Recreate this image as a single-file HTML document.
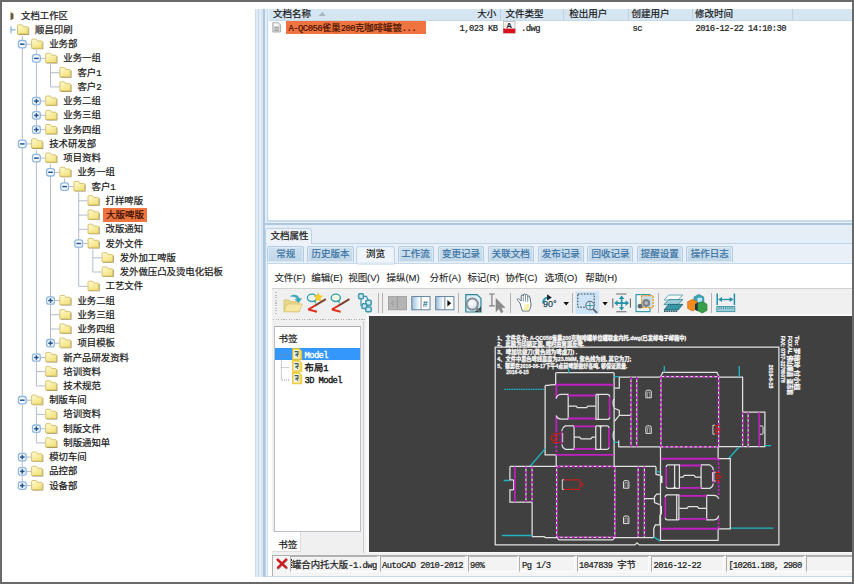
<!DOCTYPE html>
<html lang="zh-CN"><head><meta charset="utf-8"><title>文档工作区</title>
<style>
*{box-sizing:border-box;margin:0;padding:0}
html,body{width:854px;height:584px;overflow:hidden;background:#fff}
body{position:relative;-webkit-text-stroke:0.22px currentColor;font-family:"Liberation Sans","Noto Sans CJK SC",sans-serif;font-size:9.5px;color:#1c1c1c;line-height:14px}
#frame{position:absolute;left:0;top:0;width:854px;height:584px;border:2px solid #6a6a6a;pointer-events:none;z-index:50}
.abs{position:absolute}
#tree{position:absolute;left:0;top:0;width:254px;height:584px;overflow:hidden}
.tl{position:absolute;white-space:nowrap;height:14px;line-height:14px;padding:0 1px;font-size:9.4px;color:#1a1a1a}
.tl.sel{background:#f0743f;color:#3a0d00;padding:0 3px;margin-left:-1.6px;font-size:9.5px;height:14.2px}
.t{position:absolute;white-space:nowrap}
.mn{font-size:9.5px;line-height:14px;color:#222;letter-spacing:-0.05px;-webkit-text-stroke:0.1px #222}
.sf{font-family:'Liberation Mono','Noto Sans CJK SC',monospace;font-size:8.8px;letter-spacing:-0.52px;line-height:13.4px;color:#1c1c1c;white-space:nowrap;overflow:hidden;border-top:1.3px solid #b2b2b2;border-left:1.3px solid #adadad;border-bottom:1px solid #fff;border-right:1px solid #fff;background:#f3f3f3}
.ss{font-family:'Liberation Mono','Noto Sans CJK SC',monospace;font-size:8.8px;letter-spacing:-0.52px}
.cj{font-size:9.4px;letter-spacing:0;font-family:'Noto Sans CJK SC',sans-serif}
.lh{line-height:14px;font-size:9.5px;color:#1a1a1a}
.tab{text-align:center;line-height:14.6px;font-size:9.5px;color:#3973a3;background:linear-gradient(#cfe0ee,#bfd6e8);border:1.1px solid #b3cde3;border-bottom:none;border-radius:2.5px 2.5px 0 0;white-space:nowrap;box-shadow:inset 0 0 0 1px rgba(225,236,246,0.75)}
.tab.act{background:#eff4fa;color:#1a1a1a;border-color:#bfd5e8;border-width:1.4px;line-height:13.8px;z-index:3}
</style></head>
<body>
<div id="tree">
<svg width="254" height="580" style="position:absolute;left:0;top:0"><defs><linearGradient id="fg" x1="0" y1="0" x2="0.6" y2="1"><stop offset="0" stop-color="#fffcd8"/><stop offset="1" stop-color="#f3e27c"/></linearGradient></defs>
<line x1="22.3" y1="35.9" x2="22.3" y2="485.6" stroke="#b3bccb" stroke-width="1"/>
<line x1="36.4" y1="50.2" x2="36.4" y2="129.6" stroke="#b3bccb" stroke-width="1"/>
<line x1="50.5" y1="64.4" x2="50.5" y2="86.9" stroke="#b3bccb" stroke-width="1"/>
<line x1="36.4" y1="149.9" x2="36.4" y2="385.9" stroke="#b3bccb" stroke-width="1"/>
<line x1="50.5" y1="164.1" x2="50.5" y2="343.2" stroke="#b3bccb" stroke-width="1"/>
<line x1="64.6" y1="178.3" x2="64.6" y2="186.6" stroke="#b3bccb" stroke-width="1"/>
<line x1="78.7" y1="192.6" x2="78.7" y2="286.3" stroke="#b3bccb" stroke-width="1"/>
<line x1="92.8" y1="249.5" x2="92.8" y2="272.0" stroke="#b3bccb" stroke-width="1"/>
<line x1="36.4" y1="406.2" x2="36.4" y2="442.9" stroke="#b3bccb" stroke-width="1"/>
<path d="M10.5 12.2 L13.5 13.7 L13.5 18.7 L10.5 20.2 Z" fill="#6b5a3a"/>
<path d="M10.5 11.2 L12.5 12.7 L10.5 13.2 Z" fill="#e8d87a"/>
<path d="M11 26.4 V33.4 M11 29.9 H15.5" stroke="#6f9fd0" stroke-width="1" fill="none"/>
<g transform="translate(17.0 24.3)"><path d="M1.4 10.6 H12.2 V3.4 H11.4 V9.8 H1.4 Z" fill="#6d6338" opacity="0.7"/><path d="M0.5 9.7 V1.6 Q0.5 0.5 1.6 0.5 H4.6 Q5.6 0.5 6 1.5 L6.4 2.4 H10.2 Q11.2 2.4 11.2 3.4 V9.7 Z" fill="url(#fg)" stroke="#cdb552" stroke-width="0.8"/></g>
<line x1="22.3" y1="44.2" x2="31.1" y2="44.2" stroke="#b3bccb" stroke-width="1"/>
<rect x="18.4" y="40.5" width="7.8" height="7.4" rx="2.3" fill="#f6fafe" stroke="#8fb7dc" stroke-width="1.3"/>
<line x1="20.0" y1="44.2" x2="24.6" y2="44.2" stroke="#24558f" stroke-width="1.5"/>
<g transform="translate(31.1 38.6)"><path d="M1.4 10.6 H12.2 V3.4 H11.4 V9.8 H1.4 Z" fill="#6d6338" opacity="0.7"/><path d="M0.5 9.7 V1.6 Q0.5 0.5 1.6 0.5 H4.6 Q5.6 0.5 6 1.5 L6.4 2.4 H10.2 Q11.2 2.4 11.2 3.4 V9.7 Z" fill="url(#fg)" stroke="#cdb552" stroke-width="0.8"/></g>
<line x1="36.4" y1="58.4" x2="45.2" y2="58.4" stroke="#b3bccb" stroke-width="1"/>
<rect x="32.5" y="54.7" width="7.8" height="7.4" rx="2.3" fill="#f6fafe" stroke="#8fb7dc" stroke-width="1.3"/>
<line x1="34.1" y1="58.4" x2="38.7" y2="58.4" stroke="#24558f" stroke-width="1.5"/>
<g transform="translate(45.2 52.8)"><path d="M1.4 10.6 H12.2 V3.4 H11.4 V9.8 H1.4 Z" fill="#6d6338" opacity="0.7"/><path d="M0.5 9.7 V1.6 Q0.5 0.5 1.6 0.5 H4.6 Q5.6 0.5 6 1.5 L6.4 2.4 H10.2 Q11.2 2.4 11.2 3.4 V9.7 Z" fill="url(#fg)" stroke="#cdb552" stroke-width="0.8"/></g>
<line x1="50.5" y1="72.7" x2="59.3" y2="72.7" stroke="#b3bccb" stroke-width="1"/>
<g transform="translate(59.3 67.1)"><path d="M1.4 10.6 H12.2 V3.4 H11.4 V9.8 H1.4 Z" fill="#6d6338" opacity="0.7"/><path d="M0.5 9.7 V1.6 Q0.5 0.5 1.6 0.5 H4.6 Q5.6 0.5 6 1.5 L6.4 2.4 H10.2 Q11.2 2.4 11.2 3.4 V9.7 Z" fill="url(#fg)" stroke="#cdb552" stroke-width="0.8"/></g>
<line x1="50.5" y1="86.9" x2="59.3" y2="86.9" stroke="#b3bccb" stroke-width="1"/>
<g transform="translate(59.3 81.3)"><path d="M1.4 10.6 H12.2 V3.4 H11.4 V9.8 H1.4 Z" fill="#6d6338" opacity="0.7"/><path d="M0.5 9.7 V1.6 Q0.5 0.5 1.6 0.5 H4.6 Q5.6 0.5 6 1.5 L6.4 2.4 H10.2 Q11.2 2.4 11.2 3.4 V9.7 Z" fill="url(#fg)" stroke="#cdb552" stroke-width="0.8"/></g>
<line x1="36.4" y1="101.1" x2="45.2" y2="101.1" stroke="#b3bccb" stroke-width="1"/>
<rect x="32.5" y="97.4" width="7.8" height="7.4" rx="2.3" fill="#f6fafe" stroke="#8fb7dc" stroke-width="1.3"/>
<line x1="34.1" y1="101.1" x2="38.7" y2="101.1" stroke="#24558f" stroke-width="1.5"/>
<line x1="36.4" y1="98.8" x2="36.4" y2="103.4" stroke="#24558f" stroke-width="1.5"/>
<g transform="translate(45.2 95.5)"><path d="M1.4 10.6 H12.2 V3.4 H11.4 V9.8 H1.4 Z" fill="#6d6338" opacity="0.7"/><path d="M0.5 9.7 V1.6 Q0.5 0.5 1.6 0.5 H4.6 Q5.6 0.5 6 1.5 L6.4 2.4 H10.2 Q11.2 2.4 11.2 3.4 V9.7 Z" fill="url(#fg)" stroke="#cdb552" stroke-width="0.8"/></g>
<line x1="36.4" y1="115.4" x2="45.2" y2="115.4" stroke="#b3bccb" stroke-width="1"/>
<rect x="32.5" y="111.7" width="7.8" height="7.4" rx="2.3" fill="#f6fafe" stroke="#8fb7dc" stroke-width="1.3"/>
<line x1="34.1" y1="115.4" x2="38.7" y2="115.4" stroke="#24558f" stroke-width="1.5"/>
<line x1="36.4" y1="113.1" x2="36.4" y2="117.7" stroke="#24558f" stroke-width="1.5"/>
<g transform="translate(45.2 109.8)"><path d="M1.4 10.6 H12.2 V3.4 H11.4 V9.8 H1.4 Z" fill="#6d6338" opacity="0.7"/><path d="M0.5 9.7 V1.6 Q0.5 0.5 1.6 0.5 H4.6 Q5.6 0.5 6 1.5 L6.4 2.4 H10.2 Q11.2 2.4 11.2 3.4 V9.7 Z" fill="url(#fg)" stroke="#cdb552" stroke-width="0.8"/></g>
<line x1="36.4" y1="129.6" x2="45.2" y2="129.6" stroke="#b3bccb" stroke-width="1"/>
<rect x="32.5" y="125.9" width="7.8" height="7.4" rx="2.3" fill="#f6fafe" stroke="#8fb7dc" stroke-width="1.3"/>
<line x1="34.1" y1="129.6" x2="38.7" y2="129.6" stroke="#24558f" stroke-width="1.5"/>
<line x1="36.4" y1="127.3" x2="36.4" y2="131.9" stroke="#24558f" stroke-width="1.5"/>
<g transform="translate(45.2 124.0)"><path d="M1.4 10.6 H12.2 V3.4 H11.4 V9.8 H1.4 Z" fill="#6d6338" opacity="0.7"/><path d="M0.5 9.7 V1.6 Q0.5 0.5 1.6 0.5 H4.6 Q5.6 0.5 6 1.5 L6.4 2.4 H10.2 Q11.2 2.4 11.2 3.4 V9.7 Z" fill="url(#fg)" stroke="#cdb552" stroke-width="0.8"/></g>
<line x1="22.3" y1="143.9" x2="31.1" y2="143.9" stroke="#b3bccb" stroke-width="1"/>
<rect x="18.4" y="140.2" width="7.8" height="7.4" rx="2.3" fill="#f6fafe" stroke="#8fb7dc" stroke-width="1.3"/>
<line x1="20.0" y1="143.9" x2="24.6" y2="143.9" stroke="#24558f" stroke-width="1.5"/>
<g transform="translate(31.1 138.3)"><path d="M1.4 10.6 H12.2 V3.4 H11.4 V9.8 H1.4 Z" fill="#6d6338" opacity="0.7"/><path d="M0.5 9.7 V1.6 Q0.5 0.5 1.6 0.5 H4.6 Q5.6 0.5 6 1.5 L6.4 2.4 H10.2 Q11.2 2.4 11.2 3.4 V9.7 Z" fill="url(#fg)" stroke="#cdb552" stroke-width="0.8"/></g>
<line x1="36.4" y1="158.1" x2="45.2" y2="158.1" stroke="#b3bccb" stroke-width="1"/>
<rect x="32.5" y="154.4" width="7.8" height="7.4" rx="2.3" fill="#f6fafe" stroke="#8fb7dc" stroke-width="1.3"/>
<line x1="34.1" y1="158.1" x2="38.7" y2="158.1" stroke="#24558f" stroke-width="1.5"/>
<g transform="translate(45.2 152.5)"><path d="M1.4 10.6 H12.2 V3.4 H11.4 V9.8 H1.4 Z" fill="#6d6338" opacity="0.7"/><path d="M0.5 9.7 V1.6 Q0.5 0.5 1.6 0.5 H4.6 Q5.6 0.5 6 1.5 L6.4 2.4 H10.2 Q11.2 2.4 11.2 3.4 V9.7 Z" fill="url(#fg)" stroke="#cdb552" stroke-width="0.8"/></g>
<line x1="50.5" y1="172.3" x2="59.3" y2="172.3" stroke="#b3bccb" stroke-width="1"/>
<rect x="46.6" y="168.6" width="7.8" height="7.4" rx="2.3" fill="#f6fafe" stroke="#8fb7dc" stroke-width="1.3"/>
<line x1="48.2" y1="172.3" x2="52.8" y2="172.3" stroke="#24558f" stroke-width="1.5"/>
<g transform="translate(59.3 166.7)"><path d="M1.4 10.6 H12.2 V3.4 H11.4 V9.8 H1.4 Z" fill="#6d6338" opacity="0.7"/><path d="M0.5 9.7 V1.6 Q0.5 0.5 1.6 0.5 H4.6 Q5.6 0.5 6 1.5 L6.4 2.4 H10.2 Q11.2 2.4 11.2 3.4 V9.7 Z" fill="url(#fg)" stroke="#cdb552" stroke-width="0.8"/></g>
<line x1="64.6" y1="186.6" x2="73.4" y2="186.6" stroke="#b3bccb" stroke-width="1"/>
<rect x="60.7" y="182.9" width="7.8" height="7.4" rx="2.3" fill="#f6fafe" stroke="#8fb7dc" stroke-width="1.3"/>
<line x1="62.3" y1="186.6" x2="66.9" y2="186.6" stroke="#24558f" stroke-width="1.5"/>
<g transform="translate(73.4 181.0)"><path d="M1.4 10.6 H12.2 V3.4 H11.4 V9.8 H1.4 Z" fill="#6d6338" opacity="0.7"/><path d="M0.5 9.7 V1.6 Q0.5 0.5 1.6 0.5 H4.6 Q5.6 0.5 6 1.5 L6.4 2.4 H10.2 Q11.2 2.4 11.2 3.4 V9.7 Z" fill="url(#fg)" stroke="#cdb552" stroke-width="0.8"/></g>
<line x1="78.7" y1="200.8" x2="87.5" y2="200.8" stroke="#b3bccb" stroke-width="1"/>
<g transform="translate(87.5 195.2)"><path d="M1.4 10.6 H12.2 V3.4 H11.4 V9.8 H1.4 Z" fill="#6d6338" opacity="0.7"/><path d="M0.5 9.7 V1.6 Q0.5 0.5 1.6 0.5 H4.6 Q5.6 0.5 6 1.5 L6.4 2.4 H10.2 Q11.2 2.4 11.2 3.4 V9.7 Z" fill="url(#fg)" stroke="#cdb552" stroke-width="0.8"/></g>
<line x1="78.7" y1="215.1" x2="87.5" y2="215.1" stroke="#b3bccb" stroke-width="1"/>
<g transform="translate(87.5 209.5)"><path d="M1.4 10.6 H12.2 V3.4 H11.4 V9.8 H1.4 Z" fill="#6d6338" opacity="0.7"/><path d="M0.5 9.7 V1.6 Q0.5 0.5 1.6 0.5 H4.6 Q5.6 0.5 6 1.5 L6.4 2.4 H10.2 Q11.2 2.4 11.2 3.4 V9.7 Z" fill="url(#fg)" stroke="#cdb552" stroke-width="0.8"/></g>
<line x1="78.7" y1="229.3" x2="87.5" y2="229.3" stroke="#b3bccb" stroke-width="1"/>
<g transform="translate(87.5 223.7)"><path d="M1.4 10.6 H12.2 V3.4 H11.4 V9.8 H1.4 Z" fill="#6d6338" opacity="0.7"/><path d="M0.5 9.7 V1.6 Q0.5 0.5 1.6 0.5 H4.6 Q5.6 0.5 6 1.5 L6.4 2.4 H10.2 Q11.2 2.4 11.2 3.4 V9.7 Z" fill="url(#fg)" stroke="#cdb552" stroke-width="0.8"/></g>
<line x1="78.7" y1="243.5" x2="87.5" y2="243.5" stroke="#b3bccb" stroke-width="1"/>
<rect x="74.8" y="239.8" width="7.8" height="7.4" rx="2.3" fill="#f6fafe" stroke="#8fb7dc" stroke-width="1.3"/>
<line x1="76.4" y1="243.5" x2="81.0" y2="243.5" stroke="#24558f" stroke-width="1.5"/>
<g transform="translate(87.5 237.9)"><path d="M1.4 10.6 H12.2 V3.4 H11.4 V9.8 H1.4 Z" fill="#6d6338" opacity="0.7"/><path d="M0.5 9.7 V1.6 Q0.5 0.5 1.6 0.5 H4.6 Q5.6 0.5 6 1.5 L6.4 2.4 H10.2 Q11.2 2.4 11.2 3.4 V9.7 Z" fill="url(#fg)" stroke="#cdb552" stroke-width="0.8"/></g>
<line x1="92.8" y1="257.8" x2="101.6" y2="257.8" stroke="#b3bccb" stroke-width="1"/>
<g transform="translate(101.6 252.2)"><path d="M1.4 10.6 H12.2 V3.4 H11.4 V9.8 H1.4 Z" fill="#6d6338" opacity="0.7"/><path d="M0.5 9.7 V1.6 Q0.5 0.5 1.6 0.5 H4.6 Q5.6 0.5 6 1.5 L6.4 2.4 H10.2 Q11.2 2.4 11.2 3.4 V9.7 Z" fill="url(#fg)" stroke="#cdb552" stroke-width="0.8"/></g>
<line x1="92.8" y1="272.0" x2="101.6" y2="272.0" stroke="#b3bccb" stroke-width="1"/>
<g transform="translate(101.6 266.4)"><path d="M1.4 10.6 H12.2 V3.4 H11.4 V9.8 H1.4 Z" fill="#6d6338" opacity="0.7"/><path d="M0.5 9.7 V1.6 Q0.5 0.5 1.6 0.5 H4.6 Q5.6 0.5 6 1.5 L6.4 2.4 H10.2 Q11.2 2.4 11.2 3.4 V9.7 Z" fill="url(#fg)" stroke="#cdb552" stroke-width="0.8"/></g>
<line x1="78.7" y1="286.3" x2="87.5" y2="286.3" stroke="#b3bccb" stroke-width="1"/>
<g transform="translate(87.5 280.7)"><path d="M1.4 10.6 H12.2 V3.4 H11.4 V9.8 H1.4 Z" fill="#6d6338" opacity="0.7"/><path d="M0.5 9.7 V1.6 Q0.5 0.5 1.6 0.5 H4.6 Q5.6 0.5 6 1.5 L6.4 2.4 H10.2 Q11.2 2.4 11.2 3.4 V9.7 Z" fill="url(#fg)" stroke="#cdb552" stroke-width="0.8"/></g>
<line x1="50.5" y1="300.5" x2="59.3" y2="300.5" stroke="#b3bccb" stroke-width="1"/>
<rect x="46.6" y="296.8" width="7.8" height="7.4" rx="2.3" fill="#f6fafe" stroke="#8fb7dc" stroke-width="1.3"/>
<line x1="48.2" y1="300.5" x2="52.8" y2="300.5" stroke="#24558f" stroke-width="1.5"/>
<line x1="50.5" y1="298.2" x2="50.5" y2="302.8" stroke="#24558f" stroke-width="1.5"/>
<g transform="translate(59.3 294.9)"><path d="M1.4 10.6 H12.2 V3.4 H11.4 V9.8 H1.4 Z" fill="#6d6338" opacity="0.7"/><path d="M0.5 9.7 V1.6 Q0.5 0.5 1.6 0.5 H4.6 Q5.6 0.5 6 1.5 L6.4 2.4 H10.2 Q11.2 2.4 11.2 3.4 V9.7 Z" fill="url(#fg)" stroke="#cdb552" stroke-width="0.8"/></g>
<line x1="50.5" y1="314.7" x2="59.3" y2="314.7" stroke="#b3bccb" stroke-width="1"/>
<g transform="translate(59.3 309.1)"><path d="M1.4 10.6 H12.2 V3.4 H11.4 V9.8 H1.4 Z" fill="#6d6338" opacity="0.7"/><path d="M0.5 9.7 V1.6 Q0.5 0.5 1.6 0.5 H4.6 Q5.6 0.5 6 1.5 L6.4 2.4 H10.2 Q11.2 2.4 11.2 3.4 V9.7 Z" fill="url(#fg)" stroke="#cdb552" stroke-width="0.8"/></g>
<line x1="50.5" y1="329.0" x2="59.3" y2="329.0" stroke="#b3bccb" stroke-width="1"/>
<g transform="translate(59.3 323.4)"><path d="M1.4 10.6 H12.2 V3.4 H11.4 V9.8 H1.4 Z" fill="#6d6338" opacity="0.7"/><path d="M0.5 9.7 V1.6 Q0.5 0.5 1.6 0.5 H4.6 Q5.6 0.5 6 1.5 L6.4 2.4 H10.2 Q11.2 2.4 11.2 3.4 V9.7 Z" fill="url(#fg)" stroke="#cdb552" stroke-width="0.8"/></g>
<line x1="50.5" y1="343.2" x2="59.3" y2="343.2" stroke="#b3bccb" stroke-width="1"/>
<rect x="46.6" y="339.5" width="7.8" height="7.4" rx="2.3" fill="#f6fafe" stroke="#8fb7dc" stroke-width="1.3"/>
<line x1="48.2" y1="343.2" x2="52.8" y2="343.2" stroke="#24558f" stroke-width="1.5"/>
<line x1="50.5" y1="340.9" x2="50.5" y2="345.5" stroke="#24558f" stroke-width="1.5"/>
<g transform="translate(59.3 337.6)"><path d="M1.4 10.6 H12.2 V3.4 H11.4 V9.8 H1.4 Z" fill="#6d6338" opacity="0.7"/><path d="M0.5 9.7 V1.6 Q0.5 0.5 1.6 0.5 H4.6 Q5.6 0.5 6 1.5 L6.4 2.4 H10.2 Q11.2 2.4 11.2 3.4 V9.7 Z" fill="url(#fg)" stroke="#cdb552" stroke-width="0.8"/></g>
<line x1="36.4" y1="357.5" x2="45.2" y2="357.5" stroke="#b3bccb" stroke-width="1"/>
<rect x="32.5" y="353.8" width="7.8" height="7.4" rx="2.3" fill="#f6fafe" stroke="#8fb7dc" stroke-width="1.3"/>
<line x1="34.1" y1="357.5" x2="38.7" y2="357.5" stroke="#24558f" stroke-width="1.5"/>
<line x1="36.4" y1="355.2" x2="36.4" y2="359.8" stroke="#24558f" stroke-width="1.5"/>
<g transform="translate(45.2 351.9)"><path d="M1.4 10.6 H12.2 V3.4 H11.4 V9.8 H1.4 Z" fill="#6d6338" opacity="0.7"/><path d="M0.5 9.7 V1.6 Q0.5 0.5 1.6 0.5 H4.6 Q5.6 0.5 6 1.5 L6.4 2.4 H10.2 Q11.2 2.4 11.2 3.4 V9.7 Z" fill="url(#fg)" stroke="#cdb552" stroke-width="0.8"/></g>
<line x1="36.4" y1="371.7" x2="45.2" y2="371.7" stroke="#b3bccb" stroke-width="1"/>
<g transform="translate(45.2 366.1)"><path d="M1.4 10.6 H12.2 V3.4 H11.4 V9.8 H1.4 Z" fill="#6d6338" opacity="0.7"/><path d="M0.5 9.7 V1.6 Q0.5 0.5 1.6 0.5 H4.6 Q5.6 0.5 6 1.5 L6.4 2.4 H10.2 Q11.2 2.4 11.2 3.4 V9.7 Z" fill="url(#fg)" stroke="#cdb552" stroke-width="0.8"/></g>
<line x1="36.4" y1="385.9" x2="45.2" y2="385.9" stroke="#b3bccb" stroke-width="1"/>
<g transform="translate(45.2 380.3)"><path d="M1.4 10.6 H12.2 V3.4 H11.4 V9.8 H1.4 Z" fill="#6d6338" opacity="0.7"/><path d="M0.5 9.7 V1.6 Q0.5 0.5 1.6 0.5 H4.6 Q5.6 0.5 6 1.5 L6.4 2.4 H10.2 Q11.2 2.4 11.2 3.4 V9.7 Z" fill="url(#fg)" stroke="#cdb552" stroke-width="0.8"/></g>
<line x1="22.3" y1="400.2" x2="31.1" y2="400.2" stroke="#b3bccb" stroke-width="1"/>
<rect x="18.4" y="396.5" width="7.8" height="7.4" rx="2.3" fill="#f6fafe" stroke="#8fb7dc" stroke-width="1.3"/>
<line x1="20.0" y1="400.2" x2="24.6" y2="400.2" stroke="#24558f" stroke-width="1.5"/>
<g transform="translate(31.1 394.6)"><path d="M1.4 10.6 H12.2 V3.4 H11.4 V9.8 H1.4 Z" fill="#6d6338" opacity="0.7"/><path d="M0.5 9.7 V1.6 Q0.5 0.5 1.6 0.5 H4.6 Q5.6 0.5 6 1.5 L6.4 2.4 H10.2 Q11.2 2.4 11.2 3.4 V9.7 Z" fill="url(#fg)" stroke="#cdb552" stroke-width="0.8"/></g>
<line x1="36.4" y1="414.4" x2="45.2" y2="414.4" stroke="#b3bccb" stroke-width="1"/>
<g transform="translate(45.2 408.8)"><path d="M1.4 10.6 H12.2 V3.4 H11.4 V9.8 H1.4 Z" fill="#6d6338" opacity="0.7"/><path d="M0.5 9.7 V1.6 Q0.5 0.5 1.6 0.5 H4.6 Q5.6 0.5 6 1.5 L6.4 2.4 H10.2 Q11.2 2.4 11.2 3.4 V9.7 Z" fill="url(#fg)" stroke="#cdb552" stroke-width="0.8"/></g>
<line x1="36.4" y1="428.7" x2="45.2" y2="428.7" stroke="#b3bccb" stroke-width="1"/>
<rect x="32.5" y="425.0" width="7.8" height="7.4" rx="2.3" fill="#f6fafe" stroke="#8fb7dc" stroke-width="1.3"/>
<line x1="34.1" y1="428.7" x2="38.7" y2="428.7" stroke="#24558f" stroke-width="1.5"/>
<line x1="36.4" y1="426.4" x2="36.4" y2="431.0" stroke="#24558f" stroke-width="1.5"/>
<g transform="translate(45.2 423.1)"><path d="M1.4 10.6 H12.2 V3.4 H11.4 V9.8 H1.4 Z" fill="#6d6338" opacity="0.7"/><path d="M0.5 9.7 V1.6 Q0.5 0.5 1.6 0.5 H4.6 Q5.6 0.5 6 1.5 L6.4 2.4 H10.2 Q11.2 2.4 11.2 3.4 V9.7 Z" fill="url(#fg)" stroke="#cdb552" stroke-width="0.8"/></g>
<line x1="36.4" y1="442.9" x2="45.2" y2="442.9" stroke="#b3bccb" stroke-width="1"/>
<g transform="translate(45.2 437.3)"><path d="M1.4 10.6 H12.2 V3.4 H11.4 V9.8 H1.4 Z" fill="#6d6338" opacity="0.7"/><path d="M0.5 9.7 V1.6 Q0.5 0.5 1.6 0.5 H4.6 Q5.6 0.5 6 1.5 L6.4 2.4 H10.2 Q11.2 2.4 11.2 3.4 V9.7 Z" fill="url(#fg)" stroke="#cdb552" stroke-width="0.8"/></g>
<line x1="22.3" y1="457.1" x2="31.1" y2="457.1" stroke="#b3bccb" stroke-width="1"/>
<rect x="18.4" y="453.4" width="7.8" height="7.4" rx="2.3" fill="#f6fafe" stroke="#8fb7dc" stroke-width="1.3"/>
<line x1="20.0" y1="457.1" x2="24.6" y2="457.1" stroke="#24558f" stroke-width="1.5"/>
<line x1="22.3" y1="454.8" x2="22.3" y2="459.4" stroke="#24558f" stroke-width="1.5"/>
<g transform="translate(31.1 451.5)"><path d="M1.4 10.6 H12.2 V3.4 H11.4 V9.8 H1.4 Z" fill="#6d6338" opacity="0.7"/><path d="M0.5 9.7 V1.6 Q0.5 0.5 1.6 0.5 H4.6 Q5.6 0.5 6 1.5 L6.4 2.4 H10.2 Q11.2 2.4 11.2 3.4 V9.7 Z" fill="url(#fg)" stroke="#cdb552" stroke-width="0.8"/></g>
<line x1="22.3" y1="471.4" x2="31.1" y2="471.4" stroke="#b3bccb" stroke-width="1"/>
<rect x="18.4" y="467.7" width="7.8" height="7.4" rx="2.3" fill="#f6fafe" stroke="#8fb7dc" stroke-width="1.3"/>
<line x1="20.0" y1="471.4" x2="24.6" y2="471.4" stroke="#24558f" stroke-width="1.5"/>
<line x1="22.3" y1="469.1" x2="22.3" y2="473.7" stroke="#24558f" stroke-width="1.5"/>
<g transform="translate(31.1 465.8)"><path d="M1.4 10.6 H12.2 V3.4 H11.4 V9.8 H1.4 Z" fill="#6d6338" opacity="0.7"/><path d="M0.5 9.7 V1.6 Q0.5 0.5 1.6 0.5 H4.6 Q5.6 0.5 6 1.5 L6.4 2.4 H10.2 Q11.2 2.4 11.2 3.4 V9.7 Z" fill="url(#fg)" stroke="#cdb552" stroke-width="0.8"/></g>
<line x1="22.3" y1="485.6" x2="31.1" y2="485.6" stroke="#b3bccb" stroke-width="1"/>
<rect x="18.4" y="481.9" width="7.8" height="7.4" rx="2.3" fill="#f6fafe" stroke="#8fb7dc" stroke-width="1.3"/>
<line x1="20.0" y1="485.6" x2="24.6" y2="485.6" stroke="#24558f" stroke-width="1.5"/>
<line x1="22.3" y1="483.3" x2="22.3" y2="487.9" stroke="#24558f" stroke-width="1.5"/>
<g transform="translate(31.1 480.0)"><path d="M1.4 10.6 H12.2 V3.4 H11.4 V9.8 H1.4 Z" fill="#6d6338" opacity="0.7"/><path d="M0.5 9.7 V1.6 Q0.5 0.5 1.6 0.5 H4.6 Q5.6 0.5 6 1.5 L6.4 2.4 H10.2 Q11.2 2.4 11.2 3.4 V9.7 Z" fill="url(#fg)" stroke="#cdb552" stroke-width="0.8"/></g>
</svg>
<div class="tl" style="left:20.0px;top:8.7px">文档工作区</div>
<div class="tl" style="left:34.1px;top:22.9px">顺昌印刷</div>
<div class="tl" style="left:48.2px;top:37.2px">业务部</div>
<div class="tl" style="left:62.3px;top:51.4px">业务一组</div>
<div class="tl" style="left:76.4px;top:65.7px">客户<span class="ss" style="font-size:9px">1</span></div>
<div class="tl" style="left:76.4px;top:79.9px">客户<span class="ss" style="font-size:9px">2</span></div>
<div class="tl" style="left:62.3px;top:94.1px">业务二组</div>
<div class="tl" style="left:62.3px;top:108.4px">业务三组</div>
<div class="tl" style="left:62.3px;top:122.6px">业务四组</div>
<div class="tl" style="left:48.2px;top:136.9px">技术研发部</div>
<div class="tl" style="left:62.3px;top:151.1px">项目资料</div>
<div class="tl" style="left:76.4px;top:165.3px">业务一组</div>
<div class="tl" style="left:90.5px;top:179.6px">客户<span class="ss" style="font-size:9px">1</span></div>
<div class="tl" style="left:104.6px;top:193.8px">打样啤版</div>
<div class="tl sel" style="left:104.6px;top:208.1px">大版啤版</div>
<div class="tl" style="left:104.6px;top:222.3px">改版通知</div>
<div class="tl" style="left:104.6px;top:236.5px">发外文件</div>
<div class="tl" style="left:118.7px;top:250.8px">发外加工啤版</div>
<div class="tl" style="left:118.7px;top:265.0px">发外做压凸及烫电化铝板</div>
<div class="tl" style="left:104.6px;top:279.3px">工艺文件</div>
<div class="tl" style="left:76.4px;top:293.5px">业务二组</div>
<div class="tl" style="left:76.4px;top:307.7px">业务三组</div>
<div class="tl" style="left:76.4px;top:322.0px">业务四组</div>
<div class="tl" style="left:76.4px;top:336.2px">项目模板</div>
<div class="tl" style="left:62.3px;top:350.5px">新产品研发资料</div>
<div class="tl" style="left:62.3px;top:364.7px">培训资料</div>
<div class="tl" style="left:62.3px;top:378.9px">技术规范</div>
<div class="tl" style="left:48.2px;top:393.2px">制版车间</div>
<div class="tl" style="left:62.3px;top:407.4px">培训资料</div>
<div class="tl" style="left:62.3px;top:421.7px">制版文件</div>
<div class="tl" style="left:62.3px;top:435.9px">制版通知单</div>
<div class="tl" style="left:48.2px;top:450.1px">模切车间</div>
<div class="tl" style="left:48.2px;top:464.4px">品控部</div>
<div class="tl" style="left:48.2px;top:478.6px">设备部</div>
</div>
<div class="abs" style="left:255px;top:9px;width:14px;height:568px;background:linear-gradient(90deg,#c9dcec 0,#c9dcec 1.5px,#e1ebf5 1.5px,#e1ebf5 3px,#c6d9ea 3px,#c6d9ea 4.3px,#e3edf6 4.3px,#e3edf6 6px,#d9e6f2 6px,#d9e6f2 7.6px,#a9c7e1 7.6px,#a9c7e1 9.8px,#e4eef7 9.8px,#e4eef7 11.6px,#c3d8ea 11.6px,#c3d8ea 13.2px,#f1f6fb 13.2px)"></div>
<div class="abs" style="left:267px;top:220px;width:585px;height:1.6px;background:#c6daeb"></div>
<div class="abs" style="left:265px;top:221.6px;width:587px;height:1.7px;background:#eaf1f8"></div>
<div class="abs" style="left:263.4px;top:223.3px;width:588.6px;height:2px;background:#adc9e2"></div>
<div class="abs" style="left:268.6px;top:9px;width:583.4px;height:11.6px;background:#d5e5f2;border-bottom:1px solid #c6daeb"></div>
<div class="t lh" style="left:273px;top:6.9px">文档名称</div>
<div class="t lh" style="left:477.2px;top:6.9px">大小</div>
<div class="t lh" style="left:505.4px;top:6.9px">文件类型</div>
<div class="t lh" style="left:569.2px;top:6.9px">检出用户</div>
<div class="t lh" style="left:631.6px;top:6.9px">创建用户</div>
<div class="t lh" style="left:695px;top:6.9px">修改时间</div>
<div class="abs" style="left:499.5px;top:9px;width:1px;height:11px;background:#bcd3e7"></div>
<div class="abs" style="left:563px;top:9px;width:1px;height:11px;background:#bcd3e7"></div>
<div class="abs" style="left:627.5px;top:9px;width:1px;height:11px;background:#bcd3e7"></div>
<div class="abs" style="left:691.5px;top:9px;width:1px;height:11px;background:#bcd3e7"></div>
<div class="abs" style="left:791.5px;top:9px;width:1px;height:11px;background:#bcd3e7"></div>
<svg class="abs" style="left:318px;top:11px" width="9" height="6"><path d="M0.5 5 L4.3 1 L8 5 Z" fill="#a9b7c4"/></svg>
<svg class="abs" style="left:272px;top:22.4px" width="10" height="11"><path d="M0.8 0.7 H6.4 L8.6 2.8 V10 H0.8 Z" fill="#dedede" stroke="#a6a6a6" stroke-width="0.9"/><path d="M2 1.6 H6 V4 H2 Z" fill="#fafafa"/><path d="M2.4 5.4 H7 M2.4 7 H7 M2.4 8.6 H7" stroke="#8a8f8a" stroke-width="0.8"/></svg>
<div class="t" style="left:286px;top:20.6px;width:140px;height:13.6px;line-height:13.4px;background:#f0743f;color:#4a1405;padding-left:2.6px" ><span class="ss">A-QC056<span class="cj">雀巢</span>200<span class="cj">克咖啡罐镀</span>...</span></div>
<div class="t ss" style="left:459.4px;top:21.5px;line-height:14px;color:#222">1,023 KB</div>
<svg class="abs" style="left:503px;top:21px" width="13" height="13"><rect x="0.5" y="0.5" width="11.5" height="11.5" fill="#f4f4f4" stroke="#b9b9b9" stroke-width="0.8"/><rect x="0.3" y="7.6" width="12" height="4.6" fill="#d8121c"/><text x="6.2" y="7.4" font-family="Liberation Sans,sans-serif" font-size="8" font-weight="bold" text-anchor="middle" fill="#2a2a2a">A</text></svg>
<div class="t ss" style="left:521px;top:21.5px;line-height:14px;color:#222">.dwg</div>
<div class="t ss" style="left:632.6px;top:21.5px;line-height:14px;color:#222">sc</div>
<div class="t ss" style="left:695.6px;top:21.5px;line-height:14px;color:#222">2016-12-22 14:10:30</div>
<div class="abs" style="left:265px;top:225.3px;width:587px;height:18px;background:#e5edf6"></div>
<div class="abs" style="left:265.3px;top:227.6px;width:47px;height:16px;background:#edf3f9;border:1.2px solid #bdd3e7;border-bottom:none;border-radius:3px 3px 0 0"></div>
<div class="t" style="left:270.5px;top:228.6px;line-height:14px;font-size:9.5px;color:#1a1a1a">文档属性</div>
<div class="abs" style="left:265.3px;top:242.8px;width:586.7px;height:334.4px;background:#e9f0f8;border-top:1.2px solid #bdd3e7;border-left:1.2px solid #bdd3e7"></div>
<div class="abs" style="left:266.5px;top:242.6px;width:44.6px;height:2px;background:#edf3f9"></div>
<div class="abs tab" style="left:267.3px;top:246px;width:36.89999999999998px;height:15.6px">常规</div>
<div class="abs tab" style="left:307px;top:246px;width:47px;height:15.6px">历史版本</div>
<div class="abs tab act" style="left:356.4px;top:246px;width:38.4px;height:17.4px">浏览</div>
<div class="abs tab" style="left:397.5px;top:246px;width:36.0px;height:15.6px">工作流</div>
<div class="abs tab" style="left:437.5px;top:246px;width:46.80000000000001px;height:15.6px">变更记录</div>
<div class="abs tab" style="left:487.5px;top:246px;width:46.5px;height:15.6px">关联文档</div>
<div class="abs tab" style="left:537.5px;top:246px;width:46.5px;height:15.6px">发布记录</div>
<div class="abs tab" style="left:587.3px;top:246px;width:46.200000000000045px;height:15.6px">回收记录</div>
<div class="abs tab" style="left:636.7px;top:246px;width:46.299999999999955px;height:15.6px">提醒设置</div>
<div class="abs tab" style="left:686.4px;top:246px;width:46.60000000000002px;height:15.6px">操作日志</div>
<div class="abs" style="left:267px;top:263.2px;width:585px;height:315px;background:#fff;border-top:1.7px solid #c3d8ea;border-left:1.2px solid #cfdfee"></div>
<div class="abs" style="left:357.6px;top:263.2px;width:36.2px;height:1.7px;background:#dbe8f3;z-index:4"></div>
<div class="abs" style="left:271.6px;top:288.2px;width:580.4px;height:287.5px;background:#f0f0f0"></div>
<div class="abs" style="left:271.6px;top:288.2px;width:580.4px;height:1.3px;background:#d2d2d2"></div>
<div class="t mn" style="left:274.4px;top:271.4px">文件(F)</div>
<div class="t mn" style="left:311.2px;top:271.4px">编辑(E)</div>
<div class="t mn" style="left:348.2px;top:271.4px">视图(V)</div>
<div class="t mn" style="left:386.6px;top:271.4px">操纵(M)</div>
<div class="t mn" style="left:429.6px;top:271.4px">分析(A)</div>
<div class="t mn" style="left:467.4px;top:271.4px">标记(R)</div>
<div class="t mn" style="left:505.4px;top:271.4px">协作(C)</div>
<div class="t mn" style="left:544.8px;top:271.4px">选项(O)</div>
<div class="t mn" style="left:585.2px;top:271.4px">帮助(H)</div>
<div class="abs" style="left:275.4px;top:291.5px;width:1.2px;height:23px;background:repeating-linear-gradient(180deg,#c2c2c2 0,#c2c2c2 1.2px,transparent 1.2px,transparent 2.6px)"></div>
<div class="abs" style="left:272.6px;top:318.8px;width:93.5px;height:1.2px;background:repeating-linear-gradient(90deg,#b0b0b0 0,#b0b0b0 1.3px,transparent 1.3px,transparent 2.6px)"></div>
<div class="abs" style="left:377.6px;top:292.5px;width:1.1px;height:20px;background:#b2b2b2"></div>
<div class="abs" style="left:381.6px;top:292.5px;width:1.1px;height:20px;background:#b2b2b2"></div>
<div class="abs" style="left:458px;top:292.5px;width:1.1px;height:20px;background:#b2b2b2"></div>
<div class="abs" style="left:509.8px;top:292.5px;width:1.1px;height:20px;background:#b2b2b2"></div>
<div class="abs" style="left:572.2px;top:292.5px;width:1.1px;height:20px;background:#b2b2b2"></div>
<div class="abs" style="left:658.4px;top:292.5px;width:1.1px;height:20px;background:#b2b2b2"></div>
<div class="abs" style="left:710.5px;top:292.5px;width:1.1px;height:20px;background:#b2b2b2"></div>

<svg class="abs" style="left:271.6px;top:289.6px" width="580" height="27" viewBox="271.6 289.6 580 27" font-family="Liberation Sans,sans-serif">
<defs>
<linearGradient id="pg" x1="0" x2="1" y1="0" y2="0"><stop offset="0" stop-color="#9dbfd6"/><stop offset="0.4" stop-color="#f4f9fc"/><stop offset="0.47" stop-color="#fff"/><stop offset="0.5" stop-color="#35506b"/><stop offset="0.55" stop-color="#fdfefe"/><stop offset="1" stop-color="#fff"/></linearGradient>
<linearGradient id="fo" x1="0" x2="0" y1="0" y2="1"><stop offset="0" stop-color="#fbeea0"/><stop offset="1" stop-color="#eacb5a"/></linearGradient>
<radialGradient id="lens" cx="0.45" cy="0.4" r="0.6"><stop offset="0" stop-color="#fff"/><stop offset="1" stop-color="#cfdde8"/></radialGradient>
</defs>
<!-- open folder -->
<path d="M283.6 311.2 V299.6 H288.6 L290 301.2 H298.6 V311.2 Z" fill="#ead88c" stroke="#d3b95a" stroke-width="0.7"/>
<path d="M283.6 311.4 L286.8 303.6 H302 L298.8 311.4 Z" fill="#f5e7a6" stroke="#d9c068" stroke-width="0.7"/>
<path d="M289.8 296 C293.4 293.4 298 294.6 299 298.4 L301.2 298 L298.4 302.2 L294.6 299.2 L296.8 298.8 C296 296.6 293 295.6 289.8 296 Z" fill="#35aabb" stroke="#2a98aa" stroke-width="0.4"/>
<!-- wand 1 -->
<ellipse cx="311.6" cy="297.4" rx="4.6" ry="3.7" fill="#eef6ee" stroke="#2fa2aa" stroke-width="1.4"/>
<path d="M313 300.6 L315.6 303.6 L315.4 299.8 Z" fill="#2fa2aa"/>
<path d="M317.8 292.4 L319.1 295.2 L322.2 295.6 L319.9 297.7 L320.5 300.8 L317.8 299.3 L315.1 300.8 L315.7 297.7 L313.4 295.6 L316.5 295.2 Z" fill="#f9cf2e" stroke="#eab21a" stroke-width="0.4"/>
<path d="M315 304.9 L325.4 298.8" stroke="#7d4130" stroke-width="2"/>
<path d="M307.9 309.1 L315.4 304.7" stroke="#d9321f" stroke-width="2"/>
<path d="M307.9 309.1 L316.6 311.4" stroke="#e3301c" stroke-width="2.1"/>
<!-- wand 2 -->
<ellipse cx="335.4" cy="297.4" rx="4.6" ry="3.7" fill="#f3f5e2" stroke="#2fa2aa" stroke-width="1.4"/>
<path d="M336.8 300.6 L339.4 303.6 L339.2 299.8 Z" fill="#2fa2aa"/>
<path d="M338.6 304.9 L349 298.8" stroke="#7d4130" stroke-width="2"/>
<path d="M331.5 309.1 L339 304.7" stroke="#d9321f" stroke-width="2"/>
<path d="M331.5 309.1 L340.2 311.4" stroke="#e3301c" stroke-width="2.1"/>
<!-- tree -->
<path d="M360.6 298 V305.8 M362 296 H366 L368 300 M364 306 H366" fill="none" stroke="#3d97ad" stroke-width="1.2"/>
<rect x="358.2" y="293.4" width="4.8" height="5" rx="1.2" fill="#cfe8ef" stroke="#3d97ad" stroke-width="1.5"/>
<rect x="365.4" y="299.8" width="5.4" height="5" rx="1.2" fill="#cfe8ef" stroke="#3d97ad" stroke-width="1.5"/>
<rect x="361.6" y="303.4" width="4.8" height="4.8" rx="1.2" fill="#cfe8ef" stroke="#3d97ad" stroke-width="1.5"/>
<rect x="365.4" y="306.6" width="5.4" height="4.8" rx="1.2" fill="#cfe8ef" stroke="#3d97ad" stroke-width="1.5"/>
<!-- first page (disabled) -->
<rect x="388" y="296.2" width="18.2" height="13.2" fill="#b4b4b4" stroke="#9a9a9a" stroke-width="0.8"/>
<path d="M397 296.2 V309.4" stroke="#999" stroke-width="1"/>
<path d="M393.4 300.6 L391 302.8 L393.4 305" fill="none" stroke="#8c8c8c" stroke-width="0.9"/>
<!-- goto page -->
<rect x="411.4" y="296.2" width="18.2" height="13.2" fill="url(#pg)" stroke="#54789a" stroke-width="0.9"/>
<text x="424.8" y="306.4" font-size="9" font-weight="bold" fill="#1f6f86" text-anchor="middle">#</text>
<!-- next page -->
<rect x="435.3" y="296.2" width="18.2" height="13.2" fill="url(#pg)" stroke="#54789a" stroke-width="0.9"/>
<path d="M447 299.6 L450.8 302.8 L447 306 Z" fill="#111"/>
<!-- find page -->
<path d="M465.4 294.2 H476.6 L480.6 298 V311.6 H465.4 Z" fill="#dcecf2" stroke="#2a8494" stroke-width="1.2"/>
<path d="M474 311.6 H480.6 V306 Z" fill="#3b4a52"/>
<circle cx="471.9" cy="303.7" r="5.6" fill="url(#lens)" stroke="#858d94" stroke-width="1.9"/>
<path d="M476.4 308.2 L479.6 311" stroke="#6d757c" stroke-width="2"/>
<!-- text select -->
<path d="M488.6 293.6 H494.4 M491.5 293.6 V305.4 M488.6 305.4 H494.4" fill="none" stroke="#7d7d7d" stroke-width="1.2"/>
<path d="M495.6 298.2 V311 L498.6 308.2 L500.8 312.4 L502.6 311.4 L500.6 307.4 L504.6 307.2 Z" fill="#8c8c8c" stroke="#757575" stroke-width="0.5"/>
<!-- hand -->
<path d="M519.6 302.6 L517 299.8 C516.2 298.6 517.8 297.6 518.8 298.6 L520.8 300.6 V295.6 C520.8 294.2 522.8 294.2 522.9 295.6 V294.6 C523 293.2 525 293.2 525.1 294.6 V295.2 C525.2 293.8 527.2 293.8 527.3 295.2 V296.4 C527.4 295.2 529.3 295.2 529.4 296.6 L530.6 303.4 C530.8 306.6 529.6 308.6 528.6 310.6 H522 C521 308 520.4 305 519.6 302.6 Z" fill="#fff" stroke="#4d6473" stroke-width="0.9"/>
<path d="M524.4 304 L529.4 303 L528 310 H523.4 Z" fill="#f6ee9a" opacity="0.85"/>
<path d="M522.9 296 V301 M525.1 295.6 V301 M527.3 296.4 V301.4" stroke="#4d6473" stroke-width="0.7"/>
<!-- rotate 90 -->
<path d="M542.8 303 C542.6 299.6 544.6 297.4 547.6 297" fill="none" stroke="#2a9cb0" stroke-width="2"/>
<path d="M546.6 293.8 L551.4 297 L546.8 300 Z" fill="#16262c"/>
<text x="542.6" y="307" font-size="9" fill="#1f4a5c" stroke="#1f4a5c" stroke-width="0.25" textLength="13.6" lengthAdjust="spacingAndGlyphs">90°</text>
<path d="M563 301.6 H568.6 L565.8 305 Z" fill="#111"/>
<!-- zoom rect selected -->
<rect x="575.2" y="291.2" width="23.6" height="22.8" fill="#cce4f7"/>
<rect x="577.4" y="293.6" width="16.4" height="13.2" fill="none" stroke="#3a3a3a" stroke-width="1" stroke-dasharray="1.6 1.4"/>
<circle cx="589.6" cy="305.2" r="4.2" fill="#e8f2f8" stroke="#6e7a84" stroke-width="1.2"/>
<path d="M586 305.2 H593.2 M589.6 301.8 V308.6" stroke="#2a94a8" stroke-width="1"/>
<path d="M592.6 308.4 L596.6 312.4" stroke="#5d6870" stroke-width="1.9"/>
<path d="M602 301.6 H607.4 L604.7 305 Z" fill="#111"/>
<!-- pan 4 arrows -->
<path d="M612.4 298 V307.4 M630 298 V307.4 M615.8 293.6 H626 M615.8 311.4 H626" stroke="#6a6a6a" stroke-width="1.1" fill="none"/>
<path d="M621.2 297 V308.4 M615.6 302.7 H626.8" stroke="#2391a6" stroke-width="1.6"/>
<path d="M621.2 295.2 L624 298.6 H618.4 Z M621.2 310.2 L624 306.8 H618.4 Z M613.8 302.7 L617.2 299.9 V305.5 Z M628.6 302.7 L625.2 299.9 V305.5 Z" fill="#2391a6"/>
<!-- magnifier window -->
<rect x="635.6" y="294.2" width="14" height="17" fill="#f1f6f8" stroke="#3a9aac" stroke-width="1.2"/>
<rect x="641.2" y="295.2" width="11.6" height="12" fill="#c9dde8" stroke="#f29a1c" stroke-width="1.3" stroke-dasharray="2 1"/>
<circle cx="639.6" cy="305.8" r="2.4" fill="#5f656b"/>
<circle cx="645.8" cy="302.6" r="3.9" fill="#7b8288"/>
<circle cx="645.8" cy="302.6" r="1.7" fill="#b9c2c9"/>
<!-- layers -->
<path d="M668.4 294.6 H682.4 L677.6 299.6 H663.6 Z" fill="#f4f8fa" stroke="#5fa3b3" stroke-width="0.9"/>
<path d="M668.4 299.2 H682.4 L677.6 304.2 H663.6 Z" fill="#9ccdd6" stroke="#3c8b9b" stroke-width="0.9"/>
<path d="M668.4 304 H682.4 L677.6 309.6 H663.6 Z" fill="#3b97a6" stroke="#1f6470" stroke-width="0.9"/>
<path d="M663.6 310.8 H677.4" stroke="#1f5560" stroke-width="1.4" stroke-dasharray="1.6 0.7"/>
<!-- cubes -->
<path d="M693.6 296.6 L698.4 294 L703.4 296.6 V303 L698.4 305.6 L693.6 303 Z" fill="#3aa7b8" stroke="#1f7a8a" stroke-width="0.6"/>
<rect x="697" y="297.4" width="4.6" height="4" fill="#bfe6f5"/>
<path d="M687.2 301.4 L692.2 298.8 L697 301.4 V308 L692.2 310.6 L687.2 308 Z" fill="#f28a1c" stroke="#c56608" stroke-width="0.6"/>
<path d="M696.8 303.8 L701.8 301.2 L706.6 303.8 V310 L701.8 312.6 L696.8 310 Z" fill="#37a04a" stroke="#1f6e30" stroke-width="0.6"/>
<path d="M694.6 303.6 L697.4 302 L697.4 310.8 L694.6 309.4 Z" fill="#1d3a44"/>
<!-- measure -->
<path d="M716.8 293.2 V304.6 M734 293.2 V304.6" stroke="#2391a6" stroke-width="1.5"/>
<path d="M719 299.1 H732" stroke="#2391a6" stroke-width="1.3"/>
<path d="M717.8 299.1 L721.6 296.5 V301.7 Z M733 299.1 L729.2 296.5 V301.7 Z" fill="#2391a6"/>
<rect x="716.4" y="306.2" width="18" height="5" fill="#9fcfd8" stroke="#3a97a8" stroke-width="0.9"/>
<path d="M718.6 306.4 V309 M720.8 306.4 V309 M723 306.4 V309 M725.2 306.4 V309 M727.4 306.4 V309 M729.6 306.4 V309 M731.8 306.4 V309" stroke="#2a7f8f" stroke-width="0.6"/>
</svg>

<div class="abs" style="left:365.8px;top:314.4px;width:486.2px;height:239px;background:#f9f9f9"></div>
<div class="abs" style="left:368.7px;top:316.2px;width:483.3px;height:236.2px;background:#404040"></div>
<div class="abs" style="left:362.8px;top:321px;width:1.2px;height:232px;background:#cdcdcd"></div>
<div class="abs" style="left:274px;top:326.4px;width:87.4px;height:205.4px;background:#fff;border:1.2px solid #b9bdc4;border-top-color:#a9adb4"></div>
<div class="t" style="left:278.4px;top:331.5px;font-size:9.5px;line-height:14px;color:#1a1a1a">书签</div>
<div class="abs" style="left:275.2px;top:347.8px;width:85px;height:12.4px;background:#3397fb"></div>
<svg class="abs" style="left:275px;top:346px" width="40" height="40"><path d="M6.4 8.6 H14.5 M6.4 8.6 V34 H14.5 M6.4 21.6 H14.5" fill="none" stroke="#8a8a8a" stroke-width="0.9" stroke-dasharray="1 1"/></svg>
<svg class="abs" style="left:291.8px;top:348.09999999999997px" width="11" height="13"><path d="M0.5 0.5 H7 L9.8 3 V11.8 H0.5 Z" fill="#f6da4c" stroke="#e2bd2a" stroke-width="0.7"/><rect x="1.6" y="2" width="5.8" height="8.4" fill="#eef0ea"/><path d="M2.6 3.6 H6 V6.4 H4.6 L5.8 8.8 M3 7 H5" fill="none" stroke="#3d5f5a" stroke-width="1.1"/></svg>
<div class="t" style="left:304.6px;top:348.8px;font-family:'Liberation Mono','Noto Sans CJK SC',monospace;font-size:8.8px;line-height:14px;color:#fff;letter-spacing:-0.62px;-webkit-text-stroke:0.35px #fff">Model</div>
<svg class="abs" style="left:291.8px;top:360.2px" width="11" height="13"><path d="M0.5 0.5 H7 L9.8 3 V11.8 H0.5 Z" fill="#f6da4c" stroke="#e2bd2a" stroke-width="0.7"/><rect x="1.6" y="2" width="5.8" height="8.4" fill="#eef0ea"/><path d="M2.6 3.6 H6 V6.4 H4.6 L5.8 8.8 M3 7 H5" fill="none" stroke="#3d5f5a" stroke-width="1.1"/></svg>
<div class="t" style="left:304.6px;top:360.1px;font-family:'Liberation Mono','Noto Sans CJK SC',monospace;font-size:8.8px;line-height:14px;color:#111;letter-spacing:-0.62px;-webkit-text-stroke:0.35px #111"><span class="cj">布局</span>1</div>
<svg class="abs" style="left:291.8px;top:372.4px" width="11" height="13"><path d="M0.5 0.5 H7 L9.8 3 V11.8 H0.5 Z" fill="#f6da4c" stroke="#e2bd2a" stroke-width="0.7"/><rect x="1.6" y="2" width="5.8" height="8.4" fill="#eef0ea"/><path d="M2.6 3.6 H6 V6.4 H4.6 L5.8 8.8 M3 7 H5" fill="none" stroke="#3d5f5a" stroke-width="1.1"/></svg>
<div class="t" style="left:304.6px;top:374.3px;font-family:'Liberation Mono','Noto Sans CJK SC',monospace;font-size:8.8px;line-height:14px;color:#111;letter-spacing:-0.62px;-webkit-text-stroke:0.35px #111">3D Model</div>
<div class="abs" style="left:272.4px;top:531.8px;width:28.8px;height:20.4px;background:#fff;border-right:1px solid #dcdcdc;border-bottom:1px solid #dcdcdc"></div>
<div class="t" style="left:278.2px;top:538.4px;font-size:9.5px;line-height:14px;color:#1a1a1a">书签</div>
<svg class="abs" style="left:368.7px;top:316.2px" width="483.3" height="236.2" viewBox="368.7 316.2 483.3 236.2" font-family="Liberation Sans,Noto Sans CJK SC,sans-serif">
<path d="M494.9 347.4 H778.6 V545.2 H639 L636.8 543 L634.6 545.2 H494.9 Z" fill="none" stroke="#e2e2e2" stroke-width="1.25"/>
<text x="497" y="340.1" font-size="5.6" font-weight="bold" fill="#f6f6f6" stroke="#f6f6f6" stroke-width="0.3" textLength="189" lengthAdjust="spacingAndGlyphs">1、文件名为: A-QC056雀巢200克咖啡罐单位罐联盒内托.dwg(已发邮电子邮箱中)</text>
<text x="497" y="346.4" font-size="5.6" font-weight="bold" fill="#f6f6f6" stroke="#f6f6f6" stroke-width="0.3" textLength="87" lengthAdjust="spacingAndGlyphs">2、此图为印刷正面, 啤时由背面反啤.</text>
<text x="497" y="354.0" font-size="5.6" font-weight="bold" fill="#f6f6f6" stroke="#f6f6f6" stroke-width="0.3" textLength="80" lengthAdjust="spacingAndGlyphs">3、啤加坑做刀(黄色线为啤虚刀) .</text>
<text x="497" y="360.9" font-size="5.6" font-weight="bold" fill="#f6f6f6" stroke="#f6f6f6" stroke-width="0.3" textLength="134" lengthAdjust="spacingAndGlyphs">4、文件中黑色啤线高度为23.8MM, 紫色线为线, 其它为刀;</text>
<text x="497" y="367.9" font-size="5.6" font-weight="bold" fill="#f6f6f6" stroke="#f6f6f6" stroke-width="0.3" textLength="130" lengthAdjust="spacingAndGlyphs">5、需要在2016-06-17下午4点前啤版做好各吨, 够保证质量.</text>
<text x="506" y="374.5" font-size="5.4" font-weight="bold" fill="#f6f6f6" stroke="#f6f6f6" stroke-width="0.3" textLength="22.5" lengthAdjust="spacingAndGlyphs">2016-6-15</text>
<text transform="translate(769.2 365) rotate(90)" font-size="5.4" font-weight="bold" fill="#f6f6f6" stroke="#f6f6f6" stroke-width="0.3" textLength="23.5" lengthAdjust="spacingAndGlyphs">2016-6-15</text>
<text transform="translate(780.8 336) rotate(90)" font-size="5.6" font-weight="bold" fill="#f6f6f6" stroke="#f6f6f6" stroke-width="0.3" textLength="47" lengthAdjust="spacingAndGlyphs">FAX: 0757-22780078</text>
<text transform="translate(788.1 336) rotate(90)" font-size="5.6" font-weight="bold" fill="#f6f6f6" stroke="#f6f6f6" stroke-width="0.3" textLength="59" lengthAdjust="spacingAndGlyphs">FOXAL 佛山顺昌   温志能</text>
<text transform="translate(794.8 336) rotate(90)" font-size="5.6" font-weight="bold" fill="#f6f6f6" stroke="#f6f6f6" stroke-width="0.3" textLength="54.5" lengthAdjust="spacingAndGlyphs">To: 罗艳玲   付小姐</text>
<path d="M555.4 384.9 V373.8 Q555.4 372.9 556.4 372.9 H612.8 Q613.8 372.9 613.8 373.8 V467" fill="none" stroke="#e2e2e2" stroke-width="1.25"/>
<path d="M555.4 384.9 Q550 385 547.6 385.6 H545.6 Q544.8 385.6 544.8 386.6 V455.1 H555.9 V467" fill="none" stroke="#e2e2e2" stroke-width="1.25"/>
<path d="M556 384.9 H613.2 M556 455.1 H613.2" stroke="#c21fc2" stroke-width="1.9"/>
<path d="M556 384.9 V399 M556 416 V430" stroke="#c21fc2" stroke-width="1.8"/>
<path d="M556 430 V455" stroke="#c21fc2" stroke-width="1.8" stroke-dasharray="2.4 1.6"/>
<path d="M555.9 398.9 Q556.5 395.1 560.5 394.7 H567.9 V419.3 H560.9 Q556.7 419.1 555.9 415.7" fill="none" stroke="#e2e2e2" stroke-width="1.25"/>
<path d="M567.9 395.7 H595.3 M567.9 418.7 H595.3" stroke="#c21fc2" stroke-width="1.8" fill="none"/>
<path d="M567.9 406.3 H575.9 L577.1 407.9 H586.3 L587.5 406.3 H595.3" stroke="#e2e2e2" stroke-width="1.25" fill="none"/>
<path d="M595.7 394.7 H607.3 Q609.3 394.9 609.5 397.1 M609.5 417.3 Q609.3 419.5 607.3 419.6 H595.7 V394.7 M597.9 394.7 V419.6" stroke="#e2e2e2" stroke-width="1.25" fill="none"/>
<path d="M609.3 396.9 V417.5" stroke="#c21fc2" stroke-width="1.7"/>
<path d="M573.8 426.1 H565.0 Q562.0 427.7 561.4 431.1 M561.4 444.5 Q562.0 447.9 565.0 449.5 H573.8 V426.1" fill="none" stroke="#e2e2e2" stroke-width="1.25"/>
<path d="M561.4 431.1 V444.5" stroke="#c21fc2" stroke-width="1.3"/>
<path d="M562.4 433.1 V442.5" stroke="#e2e2e2" stroke-width="0.9"/>
<path d="M573.8 426.6 H595.0 M573.8 449.0 H595.0" stroke="#c21fc2" stroke-width="1.8" fill="none"/>
<path d="M573.8 437.3 H579.4 L580.8 439.2 H590.6 L592.0 437.3 H595.0" stroke="#e2e2e2" stroke-width="1.25" fill="none"/>
<path d="M595.5 426.1 H607.0 Q608.6 426.3 608.8 428.1 M608.8 447.5 Q608.6 449.3 607.0 449.5 H595.5 V426.1 M600.3 427.7 V449.5 M599.0 426.1 L600.3 427.7 L601.6 426.1" stroke="#e2e2e2" stroke-width="1.25" fill="none"/>
<path d="M608.7 428.1 V447.5" stroke="#c21fc2" stroke-width="1.7"/>
<path d="M568.4 367.4 V373.2 M613.4 376.8 H619 M613.4 442.6 H618.6 M545.2 448.6 L529.6 466.7" stroke="#1fb6c4" stroke-width="1.3" fill="none"/>
<path d="M503.9 389.6 H544.6" stroke="#1fb6c4" stroke-width="1.3" stroke-dasharray="1.7 0.7" fill="none"/>
<path d="M619 377.3 V388.3 H614.2 M613.8 399 Q611.6 403 613.8 407.4 M614.2 408.5 L619 410.6 V415.6 L614.4 421.2 M619 415.6 H630.6 M613.8 431 Q611.8 435.6 613.8 440.4 M618.4 440.6 V447.2" fill="none" stroke="#e2e2e2" stroke-width="1.25"/>
<path d="M619 377.3 H660.2 L662.4 372.6 H716.7 L719 377.3 H742.3 V412.4 H764.6 V446.9 H718.4 M618.2 447.2 H660.2" fill="none" stroke="#e2e2e2" stroke-width="1.25"/>
<path d="M630.6 377.3 V447" fill="none" stroke="#e2e2e2" stroke-width="1.2"/><path d="M630.6 377.3 V447" fill="none" stroke="#c21fc2" stroke-width="1.8" stroke-dasharray="2.6 2.2"/>
<path d="M636.4 377.3 V447" fill="none" stroke="#e2e2e2" stroke-width="1.2"/><path d="M636.4 377.3 V447" fill="none" stroke="#c21fc2" stroke-width="1.8" stroke-dasharray="2.6 2.2"/>
<path d="M645.6 398.0 V392.0 Q645.6 390.4 647.2 390.4 H649.4 Q651.0 390.4 651.0 392.0 V398.0 Z" fill="none" stroke="#e2e2e2" stroke-width="1"/><path d="M647.1 397.2 V392.4 H649.5 V397.2" fill="none" stroke="#bdbdbd" stroke-width="0.7"/>
<path d="M645.6 433.6 V427.6 Q645.6 426.0 647.2 426.0 H649.4 Q651.0 426.0 651.0 427.6 V433.6 Z" fill="none" stroke="#e2e2e2" stroke-width="1"/><path d="M647.1 432.8 V428.0 H649.5 V432.8" fill="none" stroke="#bdbdbd" stroke-width="0.7"/>
<path d="M660.6 377.3 V447 H718.3 V376.8 H660.6" fill="none" stroke="#e2e2e2" stroke-width="1.2"/><path d="M660.6 377.3 V447 H718.3 V376.8 H660.6" fill="none" stroke="#c21fc2" stroke-width="1.8" stroke-dasharray="2.6 2.2"/>
<path d="M664 366.2 V372.6 M739 366.2 V377.3 M764.6 445.8 H770.8 M739 446.9 L727.9 459.2 M730 528.3 H773" stroke="#1fb6c4" stroke-width="1.3" fill="none"/>
<path d="M742.3 412.4 V446.9" fill="none" stroke="#e2e2e2" stroke-width="1.2"/><path d="M742.3 412.4 V446.9" fill="none" stroke="#c21fc2" stroke-width="1.8" stroke-dasharray="2.6 2.2"/>
<path d="M747.9 412.4 V446.9" fill="none" stroke="#e2e2e2" stroke-width="1.2"/><path d="M747.9 412.4 V446.9" fill="none" stroke="#c21fc2" stroke-width="1.8" stroke-dasharray="2.6 2.2"/>
<path d="M759 412.4 V446.9" stroke="#c21fc2" stroke-width="1.7"/>
<path d="M759.6 426.2 H761.6 Q762.8 426.2 762.8 427.4 V433.4 Q762.8 434.5 761.6 434.5 H759.6" fill="none" stroke="#e2e2e2" stroke-width="1"/>
<path d="M509.6 466.7 H655.7 M509.6 466.7 V480 H512.4 Q513.4 480 513.4 481 V489 Q513.4 490 512.4 490 H509.6 V502.3 H531.8 V536.6" fill="none" stroke="#e2e2e2" stroke-width="1.25"/>
<path d="M514.5 466.7 V502.3" stroke="#c21fc2" stroke-width="1.7"/>
<path d="M525.6 466.7 V502.3" fill="none" stroke="#e2e2e2" stroke-width="1.2"/><path d="M525.6 466.7 V502.3" fill="none" stroke="#c21fc2" stroke-width="1.8" stroke-dasharray="2.6 2.2"/>
<path d="M531.8 466.7 V502.3" fill="none" stroke="#e2e2e2" stroke-width="1.2"/><path d="M531.8 466.7 V502.3" fill="none" stroke="#c21fc2" stroke-width="1.8" stroke-dasharray="2.6 2.2"/>
<path d="M503.3 480.7 H509 M501.6 535.7 H531.8" stroke="#1fb6c4" stroke-width="1.3" fill="none"/>
<path d="M531.8 536.8 H544 L545 537.9 H556.7 L558.6 540.1 H612.4 L614.5 537.9 H653.5" fill="none" stroke="#e2e2e2" stroke-width="1.25"/>
<path d="M556.3 466.7 V537.6 H614.5 V466.7 H556.3" fill="none" stroke="#e2e2e2" stroke-width="1.2"/><path d="M556.3 466.7 V537.6 H614.5 V466.7 H556.3" fill="none" stroke="#c21fc2" stroke-width="1.8" stroke-dasharray="2.6 2.2"/>
<path d="M563.6 480 H562 V489.6 H563.6" fill="none" stroke="#e2e2e2" stroke-width="1"/>
<path d="M563.6 480 H580.4 M563.6 489.6 H580.4" stroke="#e81414" stroke-width="1.2" stroke-dasharray="2.6 0.8"/>
<path d="M579 481.4 L583 484.6 L579 488 M579.8 483 V486.6" fill="none" stroke="#e81414" stroke-width="1"/>
<path d="M623.2 488.4 V482.4 Q623.2 480.8 624.8 480.8 H627.0 Q628.6 480.8 628.6 482.4 V488.4 Z" fill="none" stroke="#e2e2e2" stroke-width="1"/><path d="M624.7 487.6 V482.8 H627.1 V487.6" fill="none" stroke="#bdbdbd" stroke-width="0.7"/>
<path d="M623.2 523.8 V517.8 Q623.2 516.2 624.8 516.2 H627.0 Q628.6 516.2 628.6 517.8 V523.8 Z" fill="none" stroke="#e2e2e2" stroke-width="1"/><path d="M624.7 523.0 V518.2 H627.1 V523.0" fill="none" stroke="#bdbdbd" stroke-width="0.7"/>
<path d="M637.9 466.7 V537.9" fill="none" stroke="#e2e2e2" stroke-width="1.2"/><path d="M637.9 466.7 V537.9" fill="none" stroke="#c21fc2" stroke-width="1.8" stroke-dasharray="2.6 2.2"/>
<path d="M644.1 466.7 V537.9" fill="none" stroke="#e2e2e2" stroke-width="1.2"/><path d="M644.1 466.7 V537.9" fill="none" stroke="#c21fc2" stroke-width="1.8" stroke-dasharray="2.6 2.2"/>
<path d="M655.7 466.9 V474.6 L660.6 475.6 M660.1 494.3 H656.4 L654.2 497 V502.7 L659.4 504.8 M654.2 498.8 H644 M659.6 515 V525.2 H655 L653.5 528.7 V537.4" fill="none" stroke="#e2e2e2" stroke-width="1.25"/>
<path d="M661.3 476 V483.2 M660.8 506.2 V514.8" fill="none" stroke="#f2f2f2" stroke-width="1.7"/>
<path d="M655.6 472.1 H660 M653.5 537.1 L659.9 541.3" stroke="#1fb6c4" stroke-width="1.3" fill="none"/>
<path d="M660.2 447.2 V540.6 H717.8 V529 H730 V458.9 H717.8 V447" fill="none" stroke="#e2e2e2" stroke-width="1.25"/>
<path d="M660.6 459 H717.8 M660.6 529 H717.8" stroke="#c21fc2" stroke-width="1.9"/>
<path d="M718.3 459 V472 M718.3 481.5 V497 M718.3 518.6 V529" stroke="#c21fc2" stroke-width="1.8" stroke-dasharray="2.4 1.4"/>
<path d="M700.8 488.6 H709.6 Q712.6 487.0 713.2 483.6 M713.2 470.2 Q712.6 466.8 709.6 465.2 H700.8 V488.6" fill="none" stroke="#e2e2e2" stroke-width="1.25"/>
<path d="M713.2 483.6 V470.2" stroke="#c21fc2" stroke-width="1.3"/>
<path d="M712.2 481.6 V472.2" stroke="#e2e2e2" stroke-width="0.9"/>
<path d="M700.8 488.1 H679.6 M700.8 465.7 H679.6" stroke="#c21fc2" stroke-width="1.8" fill="none"/>
<path d="M700.8 477.4 H695.2 L693.8 475.5 H684.0 L682.6 477.4 H679.6" stroke="#e2e2e2" stroke-width="1.25" fill="none"/>
<path d="M679.1 488.6 H667.6 Q666.0 488.4 665.8 486.6 M665.8 467.2 Q666.0 465.4 667.6 465.2 H679.1 V488.6 M674.3 487.0 V465.2 M675.6 488.6 L674.3 487.0 L673.0 488.6" stroke="#e2e2e2" stroke-width="1.25" fill="none"/>
<path d="M665.9 486.6 V467.2" stroke="#c21fc2" stroke-width="1.7"/>
<path d="M718.4 515.9 Q717.8 519.7 713.8 520.1 H706.4 V495.5 H713.4 Q717.6 495.7 718.4 499.1" fill="none" stroke="#e2e2e2" stroke-width="1.25"/>
<path d="M706.4 519.1 H679.0 M706.4 496.1 H679.0" stroke="#c21fc2" stroke-width="1.8" fill="none"/>
<path d="M706.4 508.5 H698.4 L697.2 506.9 H688.0 L686.8 508.5 H679.0" stroke="#e2e2e2" stroke-width="1.25" fill="none"/>
<path d="M678.6 520.1 H667.0 Q665.0 519.9 664.8 517.7 M664.8 497.5 Q665.0 495.3 667.0 495.2 H678.6 V520.1 M676.4 520.1 V495.2" stroke="#e2e2e2" stroke-width="1.25" fill="none"/>
<path d="M665.0 517.9 V497.3" stroke="#c21fc2" stroke-width="1.7"/>
<path d="M714.6 425.4 H712.6 V434.4 H714.6" fill="none" stroke="#e2e2e2" stroke-width="0.9"/>
<path d="M714.6 425.8 H719.0 M714.6 434.0 H719.0 M715.6 427.8 L720.2 430.0 L715.6 432.2 Z" fill="none" stroke="#e81414" stroke-width="1"/>
<path d="M715.6 472.4 H713.6 V481.4 H715.6" fill="none" stroke="#e2e2e2" stroke-width="0.9"/>
<path d="M715.6 472.8 H720.0 M715.6 481.0 H720.0 M716.6 474.8 L721.2 477.0 L716.6 479.2 Z" fill="none" stroke="#e81414" stroke-width="1"/>
<path d="M552.6 434 H560 M552.6 442.6 H560 M551 436.4 H556.6 V440.4 H551 Z" fill="none" stroke="#e81414" stroke-width="1"/>
</svg>
<div class="abs" style="left:271.6px;top:553.4px;width:580.4px;height:2px;background:#f0f0f0"></div>
<div class="abs" style="left:271.6px;top:555px;width:580.4px;height:20.6px;background:#f5f5f5;border-top:1.3px solid #b0b0b0;border-left:1.2px solid #b0b0b0"></div>
<div class="abs" style="left:265px;top:575.6px;width:587px;height:1.6px;background:#c5d9ea"></div>
<div class="abs" style="left:255px;top:577.2px;width:597px;height:5px;background:#fff"></div>
<svg class="abs" style="left:275.6px;top:558.2px" width="13" height="12"><path d="M1.8 2 L10.4 9.8 M10.4 1.8 L2.2 10" stroke="#5a0d0d" stroke-width="2.6" stroke-linecap="round" opacity="0.55"/><path d="M1.6 1.6 L9.8 9.2 M10 1.4 L2 9.4" stroke="#d31919" stroke-width="2.1" stroke-linecap="round"/></svg>
<div class="abs sf" style="left:290.4px;top:556.3px;width:87.9px;height:15.9px;padding-left:0.5px;padding-top:0.6px"><span class="cj">罐合内托大版</span>-1.dwg</div>
<div class="abs sf" style="left:379.6px;top:556.3px;width:86.4px;height:15.9px;padding-left:1.5px;padding-top:2.3px">AutoCAD 2010-2012</div>
<div class="abs sf" style="left:467.6px;top:556.3px;width:50.0px;height:15.9px;padding-left:1.5px;padding-top:2.3px">90%</div>
<div class="abs sf" style="left:519.4px;top:556.3px;width:55.6px;height:15.9px;padding-left:1.5px;padding-top:2.3px">Pg 1/3</div>
<div class="abs sf" style="left:576.6px;top:556.3px;width:72.8px;height:15.9px;padding-left:1.5px;padding-top:0.6px">1047839 <span class="cj">字节</span></div>
<div class="abs sf" style="left:651px;top:556.3px;width:73.4px;height:15.9px;padding-left:1.5px;padding-top:2.3px">2016-12-22</div>
<div class="abs sf" style="left:726px;top:556.3px;width:78.0px;height:15.9px;padding-left:1.5px;padding-top:2.3px"><span style="letter-spacing:-0.72px">[10261.188, 2980</span></div>
<div class="abs sf" style="left:805.6px;top:556.3px;width:47.4px;height:15.9px;padding-left:1.5px;padding-top:2.3px"></div>
<div class="abs" style="left:291.4px;top:559.4px;width:1.1px;height:9.6px;background:repeating-linear-gradient(180deg,#333 0,#333 1.6px,transparent 1.6px,transparent 2.6px)"></div>
<div id="frame"></div>
</body></html>
